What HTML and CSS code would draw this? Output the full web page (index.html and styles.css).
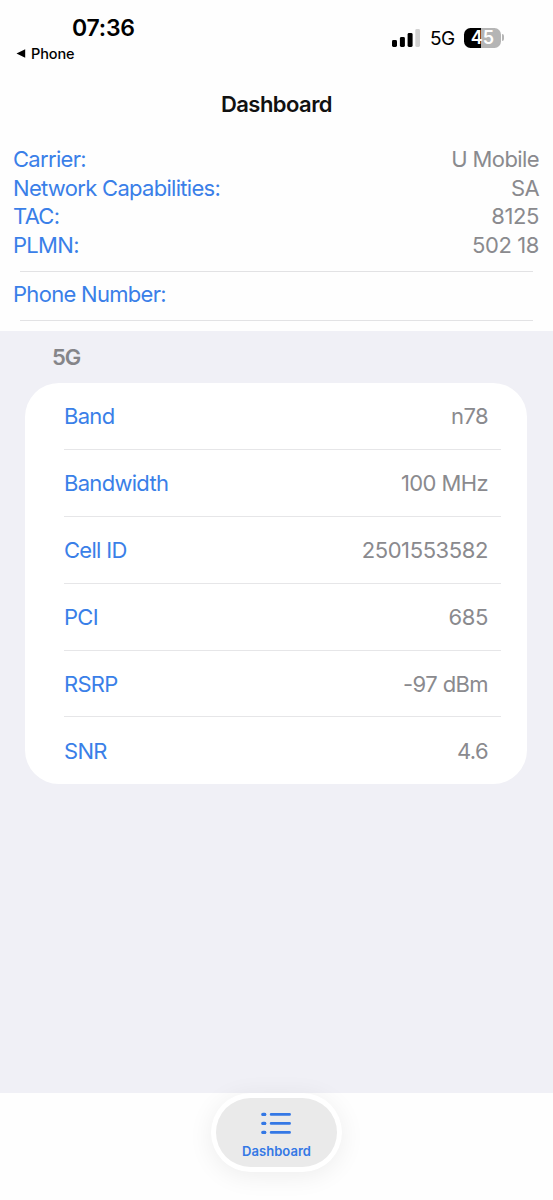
FILE: index.html
```html
<!DOCTYPE html>
<html lang="en">
<head>
<meta charset="utf-8">
<title>Dashboard</title>
<link rel="stylesheet" href="styles.css">
</head>
<body>
<div class="screen">
  <header class="status">
    <div class="status-left">
      <div class="time">07:36</div>
      <div class="back"><svg class="back-arrow" width="10" height="9" viewBox="0 0 10 9"><path d="M0.5 4.5L9.2 0.3V8.7Z" fill="#000"/></svg><span>Phone</span></div>
    </div>
    <div class="status-right">
      <svg class="signal" width="28" height="18" viewBox="0 0 28 18">
        <rect x="0" y="11" width="5" height="7" rx="1.4"/>
        <rect x="7.9" y="8" width="5" height="10" rx="1.4"/>
        <rect x="15.6" y="4" width="5" height="14" rx="1.4"/>
        <rect x="23.3" y="0" width="4.7" height="18" rx="1.4" fill="#d2d2d2"/>
      </svg>
      <span class="net">5G</span>
      <div class="battery"><span class="level">45</span></div>
      <div class="battery-cap"></div>
    </div>
  </header>
  <h1 class="title">Dashboard</h1>
  <section class="info">
    <div class="line"><span class="label">Carrier:</span><span class="value">U Mobile</span></div>
    <div class="line"><span class="label">Network Capabilities:</span><span class="value">SA</span></div>
    <div class="line"><span class="label">TAC:</span><span class="value digits">8125</span></div>
    <div class="line"><span class="label">PLMN:</span><span class="value digits">502 18</span></div>
    <hr class="rule">
    <div class="line"><span class="label">Phone Number:</span></div>
    <hr class="rule last">
  </section>
  <main class="content">
    <h2 class="section-title">5G</h2>
    <div class="card">
      <div class="row"><span class="label">Band</span><span class="value">n78</span></div>
      <div class="row"><span class="label">Bandwidth</span><span class="value">100 MHz</span></div>
      <div class="row"><span class="label">Cell ID</span><span class="value digits">2501553582</span></div>
      <div class="row"><span class="label">PCI</span><span class="value digits">685</span></div>
      <div class="row"><span class="label">RSRP</span><span class="value">-97 dBm</span></div>
      <div class="row"><span class="label">SNR</span><span class="value">4.6</span></div>
    </div>
  </main>
  <footer class="tabbar">
    <div class="pill">
      <div class="tab">
        <svg class="list" width="31" height="23" viewBox="0 0 31 23">
          <g stroke="#3478e5" stroke-linecap="round" stroke-width="2.7">
            <path d="M1.8 2.4H3.9M10.1 2.4H28.6M1.8 11.4H3.9M10.1 11.4H28.6M1.8 20.4H3.9M10.1 20.4H28.6"/>
            <path stroke-width="3.1" d="M1.9 2.4H3.8M1.9 11.4H3.8M1.9 20.4H3.8"/>
          </g>
        </svg>
        <span class="tab-label">Dashboard</span>
      </div>
    </div>
  </footer>
</div>
</body>
</html>
```
FILE: styles.css
```css
* { box-sizing: border-box; }
body {
  margin: 0;
  background: #fefefe;
  font-family: Inter, "Liberation Sans", sans-serif;
  font-size: 22px;
  color: #000;
}
.screen {
  width: 553px;
  height: 1200px;
  display: flex;
  flex-direction: column;
  overflow: hidden;
}
.status {
  height: 75px;
  display: flex;
  justify-content: space-between;
  padding: 0 49px 0 16px;
}
.time {
  padding: 13px 0 0 56px;
  font-size: 23px;
  line-height: 30px;
  font-weight: 600;
  letter-spacing: -0.2px;
}
.back {
  display: flex;
  align-items: center;
  gap: 5px;
  height: 20px;
  font-size: 14.5px;
  font-weight: 500;
  letter-spacing: -0.1px;
}
.status-right {
  display: flex;
  align-items: center;
  height: 75px;
}
.net {
  margin-left: 10px;
  width: 25px;
  padding-top: 1px;
  font-size: 19px;
  letter-spacing: -0.6px;
  white-space: nowrap;
}
.battery {
  margin-left: 9px;
  width: 37px;
  height: 20px;
  border-radius: 6.5px;
  background: linear-gradient(90deg, #000 0 17px, #b5b5b5 17px);
  display: flex;
  align-items: center;
  justify-content: center;
}
.level {
  color: #fff;
  font-size: 18px;
  line-height: 20px;
  font-weight: 600;
}
.battery-cap {
  margin-left: 1px;
  width: 2px;
  height: 7px;
  border-radius: 0 2px 2px 0;
  background: #b5b5b5;
}
.title {
  margin: 0;
  height: 60px;
  text-align: center;
  font-size: 22px;
  line-height: 59px;
  font-weight: 600;
  letter-spacing: -0.55px;
  color: #111;
}
.info {
  height: 196px;
  padding: 10px 14px 0 13px;
}
.line {
  display: flex;
  justify-content: space-between;
  height: 28.7px;
  line-height: 28.7px;
}
.label { color: #3a7fe8; letter-spacing: -0.7px; }
.value { color: #8a8a8e; letter-spacing: -0.6px; }
.digits { letter-spacing: -0.4px; }
.rule {
  height: 1.3px;
  margin: 11px 6px 7.6px 7px;
  border: 0;
  background: #e2e2e4;
}
.last { margin-top: 11.2px; }
.content {
  height: 762px;
  padding: 0 26px 0 25px;
  background: #f0f0f6;
}
.section-title {
  margin: 0;
  padding-left: 27px;
  height: 52px;
  line-height: 52px;
  font-size: 22px;
  font-weight: 600;
  letter-spacing: -1px;
  color: #858589;
}
.card {
  padding: 0 26px 0 39px;
  border-radius: 34px;
  background: #fff;
}
.row {
  display: flex;
  justify-content: space-between;
  align-items: center;
  height: 66.9px;
  padding: 1px 13px 0 0;
  border-bottom: 1.3px solid #e6e6e8;
}
.row:last-child { border-bottom: 0; }
.tabbar {
  flex: 1;
  display: flex;
  justify-content: center;
  align-items: flex-start;
}
.pill {
  padding: 5px;
  border-radius: 40px;
  background: #fff;
  box-shadow: 0 4px 26px rgba(0, 0, 0, 0.07);
}
.tab {
  width: 121px;
  height: 69px;
  padding-top: 14px;
  border-radius: 34.5px;
  background: #eaeaea;
  display: flex;
  flex-direction: column;
  align-items: center;
}
.list { display: block; fill: none; }
.tab-label {
  margin-top: 7.5px;
  font-size: 13px;
  line-height: 16px;
  font-weight: 600;
  letter-spacing: 0.05px;
  color: #3478e5;
}
```
